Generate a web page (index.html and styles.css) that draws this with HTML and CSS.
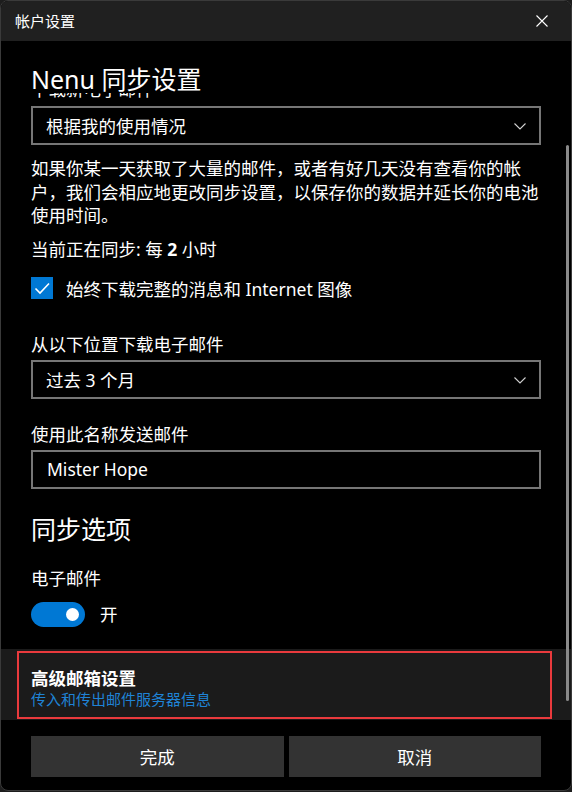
FILE: index.html
```html
<!DOCTYPE html>
<html lang="zh-CN">
<head>
<meta charset="utf-8">
<title>帐户设置</title>
<link rel="stylesheet" href="styles.css">
</head>
<body>
<div class="window">
  <div class="titlebar">
    <span class="title">帐户设置</span>
    <span class="close">
      <svg width="12" height="12" viewBox="0 0 12 12"><path d="M0.5 0.5 L11.5 11.5 M11.5 0.5 L0.5 11.5" stroke="#fff" stroke-width="1.1" fill="none"/></svg>
    </span>
  </div>
  <div class="header">Nenu 同步设置</div>
  <div class="viewport">
    <div class="content">
      <div class="label first">下载新电子邮件</div>
      <div class="select">
        <span>根据我的使用情况</span>
        <svg class="chev" width="12" height="7" viewBox="0 0 12 7"><path d="M0.5 0.5 L6 6 L11.5 0.5" stroke="#d0d0d0" stroke-width="1.1" fill="none"/></svg>
      </div>
      <p class="desc">如果你某一天获取了大量的邮件，或者有好几天没有查看你的帐<br>户，我们会相应地更改同步设置，以保存你的数据并延长你的电池<br>使用时间。</p>
      <div class="status">当前正在同步: 每 <b>2</b> 小时</div>
      <div class="check">
        <span class="box">
          <svg width="22" height="22" viewBox="0 0 22 22"><path d="M4.5 11.5 L9 16 L18 6.5" stroke="#fff" stroke-width="1.6" fill="none"/></svg>
        </span>
        <span class="check-text">始终下载完整的消息和 Internet 图像</span>
      </div>
      <div class="label gap-big">从以下位置下载电子邮件</div>
      <div class="select">
        <span>过去 3 个月</span>
        <svg class="chev" width="12" height="7" viewBox="0 0 12 7"><path d="M0.5 0.5 L6 6 L11.5 0.5" stroke="#d0d0d0" stroke-width="1.1" fill="none"/></svg>
      </div>
      <div class="label gap-mid">使用此名称发送邮件</div>
      <div class="textbox">Mister Hope</div>
      <div class="section">同步选项</div>
      <div class="label gap-sec">电子邮件</div>
      <div class="toggle-row">
        <span class="toggle"><span class="thumb"></span></span>
        <span class="toggle-text">开</span>
      </div>
      <div class="band">
        <div class="adv">
          <div class="adv-title">高级邮箱设置</div>
          <div class="adv-link">传入和传出邮件服务器信息</div>
        </div>
      </div>
    </div>
  </div>
  <div class="footer">
    <div class="btn">完成</div>
    <div class="btn">取消</div>
  </div>
  <div class="scrollbar"></div>
</div>
</body>
</html>
```

FILE: styles.css
```css
html, body {
  margin: 0;
  padding: 0;
}
body {
  background: #1d1d1d;
  font-family: "Noto Sans", "Noto Sans CJK SC", sans-serif;
  color: #fff;
}
.window {
  position: relative;
  width: 572px;
  height: 791px;
  box-sizing: border-box;
  border: 1px solid #3a3a3a;
  border-radius: 8px;
  overflow: hidden;
  background: #000;
  display: flex;
  flex-direction: column;
}
.titlebar {
  height: 40px;
  flex: none;
  background: #202020;
  display: flex;
  align-items: center;
  justify-content: space-between;
  padding: 0 23px 0 14px;
}
.title {
  font-size: 15px;
  line-height: 20px;
}
.close {
  display: flex;
  width: 12px;
  height: 12px;
}
.header {
  flex: none;
  height: 52px;
  box-sizing: border-box;
  padding: 24px 30px 0;
  font-size: 25px;
  line-height: 28px;
  background: #000;
  position: relative;
  z-index: 1;
}
.viewport {
  flex: 1;
  overflow: hidden;
}
.content {
  padding: 0 30px;
}
.label {
  font-size: 17.5px;
  line-height: 22px;
  margin-bottom: 5px;
}
.label.first {
  margin-top: -15.5px;
  margin-bottom: 6.5px;
}
.gap-big { margin-top: 34px; }
.gap-mid { margin-top: 23.5px; }
.gap-sec { margin-top: 22px; }
.select, .textbox {
  height: 39px;
  box-sizing: border-box;
  border: 2px solid #767676;
  display: flex;
  align-items: center;
  justify-content: space-between;
  padding: 0 13px 0 13px;
  font-size: 17.5px;
  line-height: 22px;
}
.textbox {
  padding-left: 14px;
}
.chev {
  margin-top: 1px;
}
.desc {
  margin: 12px 0 0;
  font-size: 17.5px;
  line-height: 23.5px;
  white-space: nowrap;
}
.status {
  margin-top: 10.5px;
  font-size: 17.5px;
  line-height: 22px;
}
.status b {
  font-weight: 700;
}
.check {
  margin-top: 17px;
  display: flex;
  align-items: center;
  height: 22px;
}
.box {
  width: 22px;
  height: 22px;
  background: #0078d4;
  display: flex;
  flex: none;
}
.check-text {
  margin-left: 13px;
  font-size: 17.5px;
  line-height: 22px;
  padding-top: 2px;
}
.section {
  margin-top: 24px;
  font-size: 25px;
  line-height: 32px;
}
.toggle-row {
  margin-top: 13px;
  display: flex;
  align-items: center;
  height: 25px;
}
.toggle {
  position: relative;
  width: 54px;
  height: 25px;
  border-radius: 13px;
  background: #0078d4;
  flex: none;
}
.thumb {
  position: absolute;
  left: 35px;
  top: 6px;
  width: 13px;
  height: 13px;
  border-radius: 50%;
  background: #fff;
}
.toggle-text {
  margin-left: 15px;
  font-size: 17.5px;
  line-height: 22px;
}
.band {
  margin: 22px -30px 0;
  height: 73px;
  box-sizing: border-box;
  background: #1b1b1b;
  padding: 2px 0 3px 16px;
}
.adv {
  width: 535px;
  height: 68px;
  box-sizing: border-box;
  border: 2px solid #ea3a3d;
  padding: 14px 12px 0;
}
.adv-title {
  font-size: 17.5px;
  line-height: 22px;
  font-weight: 700;
}
.adv-link {
  font-size: 15px;
  line-height: 20px;
  color: #1f83d6;
}
.footer {
  flex: none;
  height: 70px;
  box-sizing: border-box;
  padding: 16px 30px 0;
  display: flex;
  gap: 5px;
}
.btn {
  flex: 1;
  height: 41px;
  background: #333333;
  display: flex;
  align-items: center;
  justify-content: center;
  font-size: 17.5px;
  line-height: 22px;
}
.scrollbar {
  position: absolute;
  right: 2px;
  top: 144px;
  width: 3px;
  height: 556px;
  border-radius: 2px;
  background: #8a8a8a;
}
```
